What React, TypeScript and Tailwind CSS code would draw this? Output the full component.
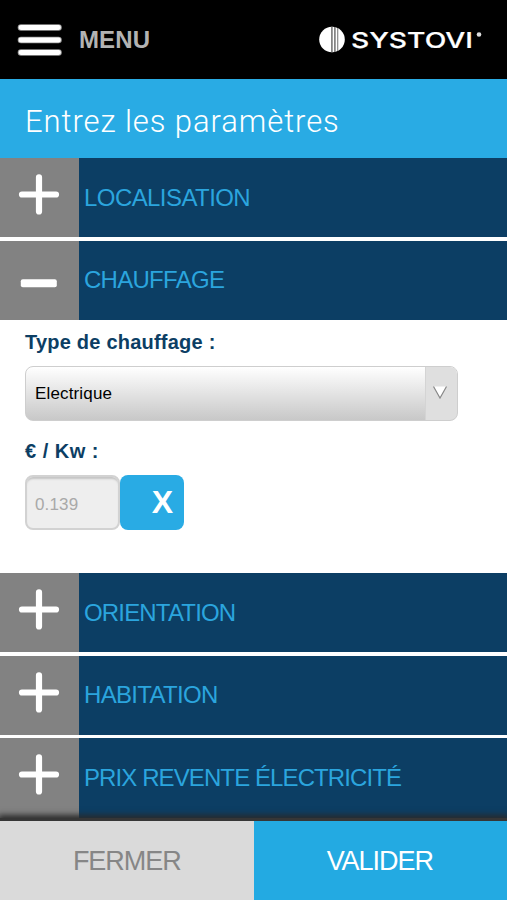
import React, { useState } from "react";

interface HeadingProps {
  label: string;
  open?: boolean;
  tracking: string;
  onClick: () => void;
}

function SectionHeading({ label, open, tracking, onClick }: HeadingProps) {
  return (
    <button
      type="button"
      onClick={onClick}
      className="flex h-[79.4px] w-full shrink-0 bg-[#0c3e64] text-left"
    >
      <span className="h-full w-[79px] shrink-0 bg-[#828282]">
        <svg viewBox="0 0 79 79" className="h-[79px] w-[79px]">
          {open ? (
            <rect x="20.8" y="38.3" width="36" height="8" rx="2" fill="#fff" />
          ) : (
            <path
              d="M22 36.5H56M39 19.3V53.5"
              stroke="#fff"
              strokeWidth="6.2"
              strokeLinecap="round"
            />
          )}
        </svg>
      </span>
      <span
        className={`self-center pl-[5px] text-[24px] leading-none whitespace-nowrap text-[#2ba5de] ${tracking}`}
      >
        {label}
      </span>
    </button>
  );
}

function Logo() {
  return (
    <svg viewBox="0 0 170 34" className="h-[34px] w-[170px]" aria-label="Systovi">
      <circle cx="15" cy="16.5" r="12.8" fill="#fff" />
      <path d="M14.9 3.7V29.3" stroke="#777" strokeWidth="1.6" />
      <path d="M17.9 4V29" stroke="#666" strokeWidth="1.4" />
      <path d="M20.7 5V28" stroke="#888" strokeWidth="1.2" />
      <text
        x="34"
        y="24.9"
        textLength="122"
        lengthAdjust="spacingAndGlyphs"
        fill="#fff"
        stroke="#fff"
        strokeWidth="0.2"
        className="font-['Inter','Liberation_Sans',sans-serif] text-[22px] font-medium"
      >
        SYSTOVI
      </text>
      <circle cx="162" cy="11.5" r="2.3" fill="#ddd" />
    </svg>
  );
}

function App() {
  const [open, setOpen] = useState(true);
  const [price, setPrice] = useState("0.139");

  return (
    <div className="flex h-[900px] w-[507px] flex-col overflow-hidden bg-white font-['Liberation_Sans',Arial,sans-serif]">
      <header className="flex h-[79px] shrink-0 items-center bg-black">
        <svg viewBox="0 0 45 34" className="ml-[17px] h-[34px] w-[45px]">
          <path
            d="M4 4.5H41.5M4 17H41.5M4 29.5H41.5"
            stroke="#999"
            strokeWidth="6.6"
            strokeLinecap="round"
          />
          <path
            d="M4 4.5H41.5M4 17H41.5M4 29.5H41.5"
            stroke="#fff"
            strokeWidth="4.8"
            strokeLinecap="round"
          />
        </svg>
        <span className="ml-[17px] text-[24px] font-bold tracking-[0.1px] text-[#b3b3b3]">
          MENU
        </span>
        <div className="mr-5 ml-auto">
          <Logo />
        </div>
      </header>

      <h1 className="flex h-[79px] shrink-0 items-center bg-[#29abe4] pt-[7px] pl-[25px] font-['Roboto',sans-serif] text-[31px] font-light tracking-[0.92px] whitespace-nowrap text-white">
        Entrez les paramètres
      </h1>

      <main className="flex flex-1 flex-col">
        <div className="flex flex-col gap-[3.2px]">
          <SectionHeading label="LOCALISATION" tracking="tracking-[-0.57px]" onClick={() => setOpen(false)} />
          <SectionHeading label="CHAUFFAGE" tracking="tracking-[-0.72px]" open={open} onClick={() => setOpen(!open)} />
        </div>

        {open && (
          <section className="h-[253px] shrink-0 pt-[11px] pl-[25px]">
            <label className="block text-[20px] leading-[22px] font-bold tracking-[0.22px] text-[#0c3e64]">
              Type de chauffage :
            </label>
            <div className="mt-[13px] flex h-[55px] w-[433px] overflow-hidden rounded-[8px] border border-[#cecece] bg-linear-to-b from-white to-[#c8c8c8]">
              <span className="flex flex-1 items-center pl-[9px] text-[17px] tracking-[0.15px] text-black">
                Electrique
              </span>
              <span className="flex w-[32px] items-center justify-center border-l border-[#d4d4d4] bg-[#dfdfdf]">
                <svg viewBox="0 0 16 15" className="mr-[3px] mb-[2px] h-[15px] w-4">
                  <path d="M1.5 1.5H14.5L8 13Z" fill="#fff" />
                  <path d="M1.5 1.5L8 13L14.5 1.5" fill="none" stroke="#888" strokeWidth="1.2" />
                </svg>
              </span>
            </div>
            <label className="mt-[19px] block text-[20px] leading-[22px] font-bold tracking-[0.5px] text-[#0c3e64]">
              € / Kw :
            </label>
            <div className="mt-[13px] flex">
              <input
                value={price}
                onChange={(e) => setPrice(e.target.value)}
                className="h-[55px] w-[95px] rounded-[8px] border-2 border-[#d2d2d2] bg-[#eeeeee] pt-[5px] pl-2 text-[17px] tracking-[0.15px] text-[#a9a9a9] shadow-[inset_0_3px_2px_-1px_#c4c4c4]"
              />
              <button
                type="button"
                onClick={() => setPrice("")}
                className="h-[55px] w-[64px] rounded-[8px] bg-[#29abe4] pl-[21px] text-[32px] leading-[54px] font-bold text-white"
              >
                X
              </button>
            </div>
          </section>
        )}

        <div className="flex flex-col gap-[3.2px]">
          <SectionHeading label="ORIENTATION" tracking="tracking-[-0.83px]" onClick={() => setOpen(false)} />
          <SectionHeading label="HABITATION" tracking="tracking-[-0.68px]" onClick={() => setOpen(false)} />
          <SectionHeading label="PRIX REVENTE ÉLECTRICITÉ" tracking="tracking-[-0.9px]" onClick={() => setOpen(false)} />
        </div>
      </main>

      <footer className="relative flex h-[79px] shrink-0 bg-[#dadada] text-[27px] tracking-[-1.05px] shadow-[0_-3px_0_#363636,0_-4px_6px_2px_#2a2a2a]">
        <button type="button" className="w-[253.5px] bg-[#dadada] pt-px text-[#868686]">
          FERMER
        </button>
        <button type="button" className="flex-1 bg-[#23aae2] pt-px pr-px text-white">
          VALIDER
        </button>
      </footer>
    </div>
  );
}

export default App;
